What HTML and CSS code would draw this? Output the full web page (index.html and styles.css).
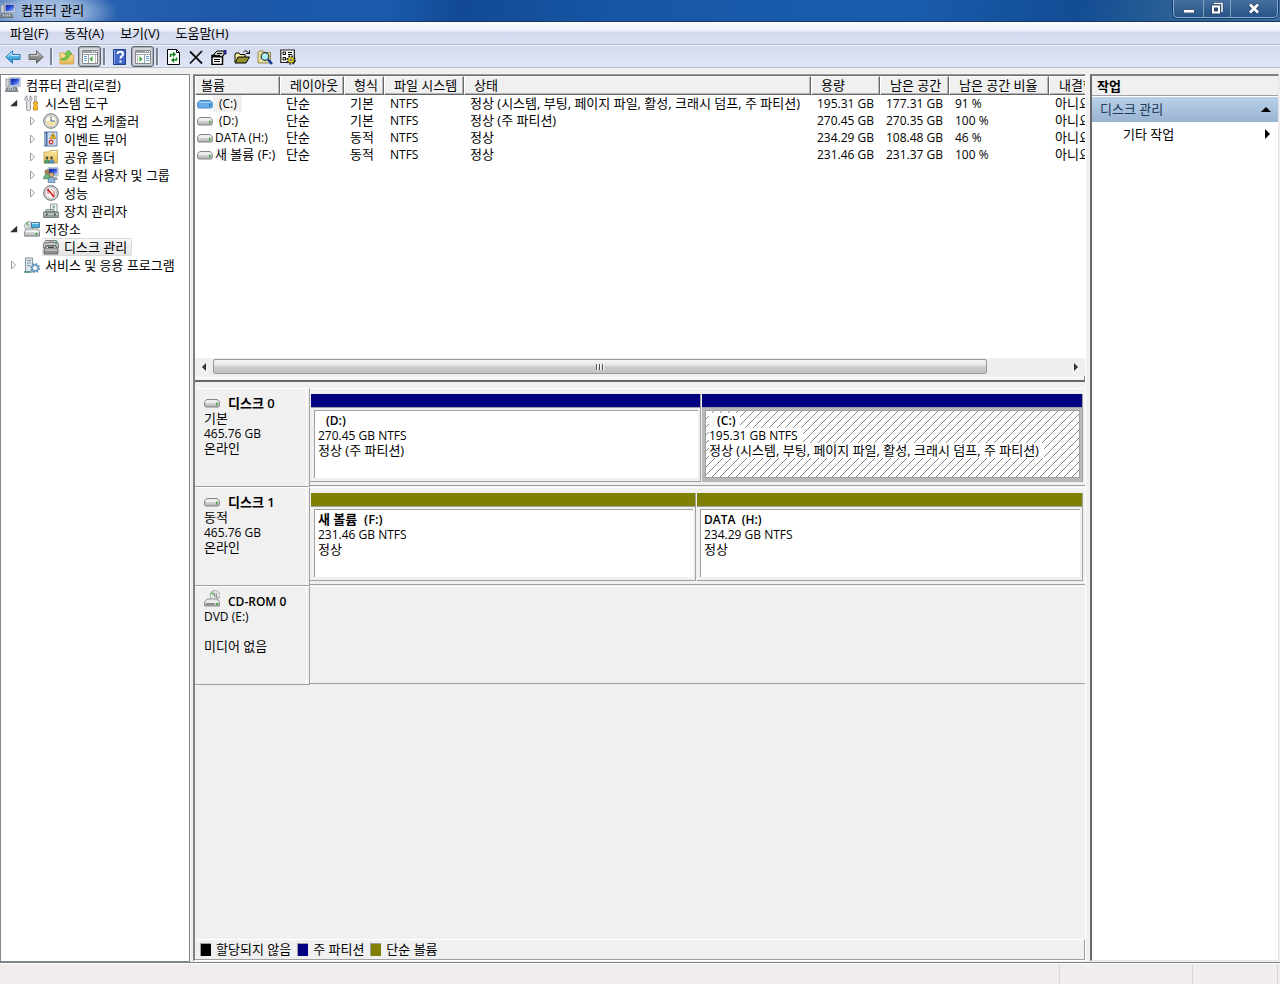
FILE: index.html
```html
<!DOCTYPE html>
<html lang="ko">
<head>
<meta charset="utf-8">
<title>컴퓨터 관리</title>
<link rel="stylesheet" href="styles.css">
</head>
<body>
<svg class="defs" aria-hidden="true">
  <defs>
    <linearGradient id="gBlue" x1="0" y1="0" x2="0" y2="1"><stop offset="0" stop-color="#8fd8f8"/><stop offset="1" stop-color="#1a86cc"/></linearGradient>
    <linearGradient id="gGray" x1="0" y1="0" x2="0" y2="1"><stop offset="0" stop-color="#b4b4b4"/><stop offset="1" stop-color="#707070"/></linearGradient>
    <linearGradient id="gScreen" x1="0" y1="0" x2="1" y2="1"><stop offset="0" stop-color="#0a1a9c"/><stop offset=".5" stop-color="#2c50d8"/><stop offset="1" stop-color="#b8ccff"/></linearGradient>
    <linearGradient id="gFolder" x1="0" y1="0" x2="0" y2="1"><stop offset="0" stop-color="#fbe9a0"/><stop offset="1" stop-color="#e3b653"/></linearGradient>
    <linearGradient id="gDisk" x1="0" y1="0" x2="0" y2="1"><stop offset="0" stop-color="#f6f6f6"/><stop offset="1" stop-color="#aeb0b4"/></linearGradient>
  </defs>
  <symbol id="computer" viewBox="0 0 16 16">
    <path d="M1 2h3v8H1z" fill="#d5d9dc" stroke="#7b8388" stroke-width=".7"/>
    <path d="M4.500 .8h10.700v8.500H4.500z" fill="#e8ebef" stroke="#949ca8" stroke-width=".8"/>
    <path d="M5.500 1.700h8.800v6.600H5.500z" fill="url(#gScreen)"/>
    <path d="M8 9.500h4l1 2H7z" fill="#a7adb5"/>
    <path d="M1.500 11h10l1.500 3.500H.5z" fill="#8c979c" stroke="#566065" stroke-width=".7"/>
    <path d="M3 12h1m1 0h1m1 0h1m1 0h1" stroke="#e9eff0"/>
  </symbol>
  <symbol id="tools" viewBox="0 0 16 16">
    <path d="M3 .8v3.500l1.500 1.200L6 4.300V.8c1.600.8 2.200 2.300 1.800 3.800-.3 1-.8 1.500-1.400 2v8c0 1.400-3.700 1.400-3.700 0v-8C1.400 5.700.7 4.900.9 3.400 1.100 2.200 1.800 1.200 3 .8z" fill="#e6e8ea" stroke="#75797d" stroke-width=".8"/>
    <path d="M10.500 1h1.800v6h-1.800z" fill="#ddd" stroke="#888" stroke-width=".6"/>
    <path d="M9.500 7h4v2l-.8 1 .8 1.500V15h-4v-3.500l.8-1.500-.8-1z" fill="#f8bd26" stroke="#bb790c" stroke-width=".7"/>
  </symbol>
  <symbol id="clock" viewBox="0 0 16 16">
    <circle cx="8" cy="8" r="7.300" fill="#ddd" stroke="#74787b"/>
    <circle cx="8" cy="8" r="5.500" fill="#fffbe8" stroke="#aaa" stroke-width=".6"/>
    <path d="M8 8h5a5 5 0 0 1-10 0z" fill="#f5e4a6"/>
    <path d="M8 3.500V8h4" fill="none" stroke="#4b6b9c" stroke-width="1.100"/>
  </symbol>
  <symbol id="event" viewBox="0 0 16 16">
    <path d="M1.500 1h12.500v14H1.500z" fill="#d9e6f5" stroke="#5c7bab"/>
    <path d="M1.500 1h3v14h-3z" fill="#456ba8"/>
    <path d="M1 3h2m-2 2h2m-2 2h2m-2 2h2m-2 2h2m-2 2h2" stroke="#e6ecf5"/>
    <path d="M5.500 4h7m-7 3h7m-7 3h7m-7 3h7" stroke="#91a8c5" stroke-width=".8"/>
    <path d="M10 2l3 5.500H7z" fill="#ffd42a" stroke="#ad7700" stroke-width=".6"/><path d="M10 4v1.800m0 .6v.8" stroke="#222" stroke-width=".8"/>
    <circle cx="8" cy="11" r="2.400" fill="#dc3941"/><path d="M7 10l2 2m0-2l-2 2" stroke="#fff" stroke-width=".8"/>
  </symbol>
  <symbol id="shared" viewBox="0 0 16 16">
    <path d="M1 3h5l1-1.500h7.500V14H1z" fill="url(#gFolder)" stroke="#c49a3f" stroke-width=".8"/><path d="M9 2.500h4" stroke="#fff"/>
    <circle cx="4" cy="8.800" r="1.400" fill="#4b4b3c"/><circle cx="8.500" cy="8.800" r="1.400" fill="#4b4b3c"/>
    <path d="M1.500 14c0-4.500 5-4.500 5 0z" fill="#4caa7a" stroke="#206a50" stroke-width=".6"/><path d="M6.200 14c0-4.500 5-4.500 5 0z" fill="#5e9ccc" stroke="#275a89" stroke-width=".6"/>
  </symbol>
  <symbol id="users" viewBox="0 0 16 16">
    <path d="M5 .8h10v8H5z" fill="#e7ebf1" stroke="#8e96a4" stroke-width=".8"/><path d="M6 1.700h8.100v6.100H6z" fill="url(#gScreen)"/>
    <path d="M10 10h4l1 3h-4z" fill="#9fa6ac"/>
    <circle cx="4" cy="5" r="2.200" fill="#a98a5c" stroke="#705230" stroke-width=".6"/><path d="M.5 12c0-6.500 6.500-6.500 6.500 0z" fill="#6db07d" stroke="#35754a" stroke-width=".5"/>
    <circle cx="8.500" cy="7.800" r="2.200" fill="#dbb27c" stroke="#7b5527" stroke-width=".7"/><path d="M5 15.500c0-7 7-7 7 0z" fill="#8fb8d8" stroke="#34668e" stroke-width=".6"/>
  </symbol>
  <symbol id="perf" viewBox="0 0 16 16">
    <circle cx="8" cy="8" r="7.300" fill="#e3e3e3" stroke="#666"/><circle cx="8" cy="8" r="5.400" fill="#fff" stroke="#999" stroke-width=".6"/>
    <path d="M5 9V4.500M11 11V6.500" fill="none" stroke="#c33" stroke-width=".9"/><path d="M4.500 4l6.500 8" stroke="#d01818" stroke-width="1.600"/><path d="M8 4l3 3" stroke="#d66" stroke-width=".8"/>
  </symbol>
  <symbol id="device" viewBox="0 0 16 16">
    <path d="M7.500 1h6.500v8H7.500z" fill="#f1f5f3" stroke="#7c8985" stroke-width=".8"/><path d="M9.500 2.500h2.500v3H9.500z" fill="#8eb69d"/>
    <path d="M3.500 6.500h7l1.500 2H2z" fill="#c8cecd" stroke="#68726f" stroke-width=".7"/>
    <path d="M.6 9h14.800v5.500H.6z" fill="#97a29f" stroke="#606a67" stroke-width=".8"/><path d="M1 11h14" stroke="#dde4e1"/><path d="M3 10.500h1.500v2H3zm8 0h1.500v2H11z" fill="#36403d"/>
  </symbol>
  <symbol id="storage" viewBox="0 0 16 16">
    <circle cx="5" cy="5" r="4.500" fill="#dfe4e6" stroke="#8a949a" stroke-width=".7"/><path d="M5 5L1 3a5 5 0 0 1 3-2.500z" fill="#80bd8b"/><circle cx="5" cy="5" r="1.300" fill="#fff" stroke="#777" stroke-width=".5"/>
    <path d="M7.500 1.500h8v5h-8z" fill="#4cb0df" stroke="#316885" stroke-width=".8"/><path d="M8 2.500h7" stroke="#b9e6fa"/>
    <path d="M2 8h12l1.500 2.500v4.700H.6v-4.700z" fill="url(#gDisk)" stroke="#72787c" stroke-width=".8"/><path d="M1 10.500h14" stroke="#fff" stroke-width=".7"/><path d="M11.500 12h2v2h-2z" fill="#38a844"/>
  </symbol>
  <symbol id="diskman" viewBox="0 0 16 16">
    <path d="M2.500 1.500h11l2 3.500v4H.5V5z" fill="#c9c9c9" stroke="#6d6d6d" stroke-width=".8"/><path d="M2 5c2-2.500 10-2.500 12 0" fill="none" stroke="#666"/><path d="M12 3.500h2" stroke="#2cb34a" stroke-width="1.500"/>
    <path d="M1 10.500l2-4h10l2 4v4.500H1z" fill="#909090" stroke="#5c5c5c" stroke-width=".8"/><path d="M4 8.500h8" stroke="#fff"/><path d="M5 8.500h6" stroke="#444"/><path d="M2 11h12" stroke="#ddd"/>
  </symbol>
  <symbol id="services" viewBox="0 0 16 16">
    <path d="M1.500 1h7v14h-7z" fill="#dfe7ec" stroke="#6d7d88" stroke-width=".8"/><path d="M3 3.500h4M3 6h4M3 8.500h3" stroke="#7d909e"/><path d="M0 15h7" stroke="#4b8d84" stroke-width="1.500"/>
    <circle cx="11" cy="11" r="3" fill="none" stroke="#79a3c5" stroke-width="2"/><circle cx="11" cy="11" r="4.300" fill="none" stroke="#628cae" stroke-width="1.300" stroke-dasharray="1.700 1.680"/>
  </symbol>
  <symbol id="drive" viewBox="0 0 16 10">
    <path d="M3 1.500h10l2.300 2v4.700l-1 .8H1.700l-1-.8V3.500z" fill="url(#gDisk)" stroke="#77797d" stroke-width=".9"/><path d="M1.500 3.500h13v1h-13z" fill="#fff"/><path d="M12 4.500h1.500v3H12z" fill="#43a548"/>
  </symbol>
  <symbol id="driveSel" viewBox="0 0 16 10">
    <path d="M3 1.500h10l2.300 2v4.700l-1 .8H1.700l-1-.8V3.500z" fill="#68adea" stroke="#3a7fbf" stroke-width=".9"/><path d="M2 3.500h12" stroke="#a0cff8"/><path d="M12 4.500h1.500v3H12z" fill="#267eac"/>
  </symbol>
  <symbol id="cdrom" viewBox="0 0 16 17">
    <circle cx="11" cy="5.500" r="5" fill="#e4e6e6" stroke="#a0a2a2" stroke-width=".8"/><path d="M11 5.500L6.500 4a5 5 0 0 1 2-3z" fill="#85bd88"/><path d="M11 5.500L15.500 7l-2 3z" fill="#b9c4d0"/><path d="M10.500 3v4m1.800-4v5" stroke="#777" stroke-width=".8"/>
    <path d="M3 9h10l2.400 3v4H.6v-4z" fill="url(#gDisk)" stroke="#77797d" stroke-width=".8"/><path d="M1.500 12h13" stroke="#fff"/><path d="M2 14h8" stroke="#555"/><path d="M12 13h2v2h-2z" fill="#34a944"/>
  </symbol>
  <symbol id="back" viewBox="0 0 16 16"><path d="M.8 8L7.500 1.800v3.700H15v5H7.500v3.700z" fill="url(#gBlue)" stroke="#287bb5"/><path d="M2.600 7.500L6.500 4v2.500h7.500" fill="none" stroke="#c1edff"/></symbol>
  <symbol id="forward" viewBox="0 0 16 16"><path d="M15.200 8L8.500 1.800v3.700H1v5h7.500v3.700z" fill="url(#gGray)" stroke="#666"/><path d="M2 6.500h7.500V4l3.900 3.500" fill="none" stroke="#ccc"/></symbol>
  <symbol id="up" viewBox="0 0 16 16"><path d="M1 4h5l1 2h7.500v9H1z" fill="url(#gFolder)" stroke="#d0a03b" stroke-width=".8"/><path d="M2.500 9.500c3 0 4.500-1 5-4.500H5.800L9.500 1l3.500 4h-2.200C10.500 9 7.500 11.500 2.500 11z" fill="#7ccc4c" stroke="#4b9c30" stroke-width=".7"/></symbol>
  <symbol id="treepane" viewBox="0 0 16 16"><path d="M.5 1.500h15v13H.5z" fill="#fff" stroke="#888"/><path d="M1 3h14" stroke="#9a9fa8" stroke-width="2"/><path d="M10 2.500h1m1 0h1m1 0h1" stroke="#fff"/><path d="M1 5.500h14M6.500 6v8" stroke="#9aa2ad"/><path d="M2 7.500h3m-3 2h3m-3 2h3" stroke="#59a0dc"/><path d="M10.500 7v6L7.500 10z" fill="#35a838"/><path d="M13.500 6v8" stroke="#bbb"/></symbol>
  <symbol id="actpane" viewBox="0 0 16 16"><path d="M.5 1.500h15v13H.5z" fill="#fff" stroke="#888"/><path d="M1 3h14" stroke="#9a9fa8" stroke-width="2"/><path d="M10 2.500h1m1 0h1m1 0h1" stroke="#fff"/><path d="M1 5.500h14M9.500 6v8" stroke="#9aa2ad"/><path d="M11 7.500h3m-3 2h3m-3 2h3" stroke="#59a0dc"/><path d="M4.500 7v6l3-3z" fill="#35a838"/><path d="M2.500 6v8" stroke="#bbb"/></symbol>
  <symbol id="help" viewBox="0 0 16 16"><path d="M1.500.5h12v15h-12z" fill="#4168c5" stroke="#213f91"/><path d="M2.500 1v14" stroke="#89a8ef"/><path d="M5.500 5c0-3 5.500-3 5.500 0 0 2-2.500 2-2.500 4.500m0 2v2" fill="none" stroke="#fff" stroke-width="2"/></symbol>
  <symbol id="refresh" viewBox="0 0 16 16"><path d="M2.500.5h9l3 3v12h-12z" fill="#fff" stroke="#000"/><path d="M11.500.5v3h3" fill="none" stroke="#000"/><path d="M5.500 8V5.500H8M11.500 8.500V11H9" fill="none" stroke="#108018" stroke-width="1.500"/><path d="M8 2.500L11 5.500 8 8zM9 8.500L6 11l3 3z" fill="#108018"/></symbol>
  <symbol id="delete" viewBox="0 0 16 16"><path d="M2 2.500l12 12M14 2L2 14.500" stroke="#111" stroke-width="1.800"/></symbol>
  <symbol id="props" viewBox="0 0 16 16"><path d="M1 6.500h10.500v9H1z" fill="#fff" stroke="#000" stroke-width="1.500"/><path d="M1 7.500h10" stroke="#000" stroke-width="2"/><path d="M3 10.500h6m-6 2h6" stroke="#000"/><path d="M2.500 5.500L6 2h7v4l-3 2-2-2-2 1z" fill="#ccc" stroke="#000"/><path d="M6 4.500h5M7 6l2 2" stroke="#000"/><path d="M13 1h2.500v4.500H13z" fill="#25258e"/></symbol>
  <symbol id="open" viewBox="0 0 16 16"><path d="M1 13V5l1-1h3l1 1.500h5V8" fill="#f7ef9f" stroke="#000"/><path d="M1 14l3-6h11.500l-3.500 6z" fill="#91912a" stroke="#000"/><path d="M9.500 3c2-2 4-1 5 1.500" fill="none" stroke="#000"/><path d="M12 4.500h3.500V1.500" fill="none" stroke="#000"/></symbol>
  <symbol id="find" viewBox="0 0 16 16"><path d="M1 3.500L2.500 2h4L8 3.500h5.500V14H1z" fill="#e6dfa4" stroke="#95894e"/><circle cx="8" cy="7.500" r="3.800" fill="#a0eef3" stroke="#333" stroke-width="1.200"/><path d="M6 6.500l2-1" stroke="#fff"/><path d="M11 10.500l4 4.500" stroke="#14329b" stroke-width="2.500"/></symbol>
  <symbol id="settings" viewBox="0 0 16 16"><path d="M.8 1h13.500v12.500H.8z" fill="#fff" stroke="#222" stroke-width="1.200"/><path d="M3 3h2.500v2.500H3zM3 8.500h2.500V11H3z" fill="none" stroke="#000"/><path d="M8 3.500h4M8 5.500h4" stroke="#000"/><circle cx="11" cy="11" r="3.900" fill="none" stroke="#222" stroke-width="1.800" stroke-dasharray="1.600 1.460"/><circle cx="11" cy="11" r="3" fill="#f0dc30" stroke="#6b6210" stroke-width=".7"/><circle cx="11" cy="11" r="1" fill="#fff" stroke="#000" stroke-width=".6"/></symbol>
</svg>

<div class="window">
  <header class="titlebar">
    <svg class="icon"><use href="#computer"/></svg>
    <h1 class="title">컴퓨터 관리</h1>
    <div class="controls">
      <button class="control min" aria-label="최소화"><svg viewBox="0 0 14 14"><path d="M1.500 7.500h11v3.500h-11z" fill="#fff" stroke="#455a78"/></svg></button>
      <button class="control max" aria-label="이전 크기로"><svg viewBox="0 0 14 14"><path d="M4 1.500h8V10" fill="none" stroke="#33496c" stroke-width="3"/><path d="M4 1.500h8V10" fill="none" stroke="#fff" stroke-width="1.500"/><path d="M3 4.500h6v6H3z" fill="#33496c" stroke="#33496c" stroke-width="4"/><path d="M3 4.500h6v6H3z" fill="#33496c" stroke="#fff" stroke-width="2"/></svg></button>
      <button class="control close" aria-label="닫기"><svg viewBox="0 0 14 14"><path d="M3 2.500l8 8m0-8l-8 8" stroke="#30476b" stroke-width="4.500"/><path d="M3 2.500l8 8m0-8l-8 8" stroke="#fff" stroke-width="2.600"/></svg></button>
    </div>
  </header>

  <nav class="menubar">
    <button class="menu">파일(F)</button>
    <button class="menu">동작(A)</button>
    <button class="menu">보기(V)</button>
    <button class="menu">도움말(H)</button>
  </nav>

  <div class="toolbar" role="toolbar">
    <button class="tool" aria-label="뒤로"><svg class="icon"><use href="#back"/></svg></button>
    <button class="tool" aria-label="앞으로"><svg class="icon"><use href="#forward"/></svg></button>
    <span class="sep"></span>
    <button class="tool" aria-label="위로"><svg class="icon"><use href="#up"/></svg></button>
    <button class="tool pressed" aria-label="콘솔 트리"><svg class="icon"><use href="#treepane"/></svg></button>
    <span class="sep"></span>
    <button class="tool" aria-label="도움말"><svg class="icon"><use href="#help"/></svg></button>
    <button class="tool pressed" aria-label="작업 창"><svg class="icon"><use href="#actpane"/></svg></button>
    <span class="sep"></span>
    <button class="tool" aria-label="새로 고침"><svg class="icon"><use href="#refresh"/></svg></button>
    <button class="tool" aria-label="삭제"><svg class="icon"><use href="#delete"/></svg></button>
    <button class="tool" aria-label="속성"><svg class="icon"><use href="#props"/></svg></button>
    <button class="tool" aria-label="열기"><svg class="icon"><use href="#open"/></svg></button>
    <button class="tool" aria-label="찾기"><svg class="icon"><use href="#find"/></svg></button>
    <button class="tool" aria-label="설정"><svg class="icon"><use href="#settings"/></svg></button>
  </div>

  <main class="workspace">
    <aside class="tree">
      <ul>
        <li><div class="node root"><svg class="icon"><use href="#computer"/></svg><span class="name">컴퓨터 관리(로컬)</span></div></li>
        <li><div class="node"><i class="twist opened"></i><svg class="icon"><use href="#tools"/></svg><span class="name">시스템 도구</span></div>
          <ul class="sub">
            <li><div class="node"><svg class="twist" viewBox="0 0 8 10"><path d="M1.500 1v8l4-4z" fill="#fff" stroke="#999"/></svg><svg class="icon"><use href="#clock"/></svg><span class="name">작업 스케줄러</span></div></li>
            <li><div class="node"><svg class="twist" viewBox="0 0 8 10"><path d="M1.500 1v8l4-4z" fill="#fff" stroke="#999"/></svg><svg class="icon"><use href="#event"/></svg><span class="name">이벤트 뷰어</span></div></li>
            <li><div class="node"><svg class="twist" viewBox="0 0 8 10"><path d="M1.500 1v8l4-4z" fill="#fff" stroke="#999"/></svg><svg class="icon"><use href="#shared"/></svg><span class="name">공유 폴더</span></div></li>
            <li><div class="node"><svg class="twist" viewBox="0 0 8 10"><path d="M1.500 1v8l4-4z" fill="#fff" stroke="#999"/></svg><svg class="icon"><use href="#users"/></svg><span class="name">로컬 사용자 및 그룹</span></div></li>
            <li><div class="node"><svg class="twist" viewBox="0 0 8 10"><path d="M1.500 1v8l4-4z" fill="#fff" stroke="#999"/></svg><svg class="icon"><use href="#perf"/></svg><span class="name">성능</span></div></li>
            <li><div class="node"><i class="twist"></i><svg class="icon"><use href="#device"/></svg><span class="name">장치 관리자</span></div></li>
          </ul></li>
        <li><div class="node"><i class="twist opened"></i><svg class="icon"><use href="#storage"/></svg><span class="name">저장소</span></div>
          <ul class="sub">
            <li><div class="node"><i class="twist"></i><span class="selected"><svg class="icon"><use href="#diskman"/></svg><span class="name">디스크 관리</span></span></div></li>
          </ul></li>
        <li><div class="node"><svg class="twist" viewBox="0 0 8 10"><path d="M1.500 1v8l4-4z" fill="#fff" stroke="#999"/></svg><svg class="icon"><use href="#services"/></svg><span class="name">서비스 및 응용 프로그램</span></div></li>
      </ul>
    </aside>

    <section class="center">
      <div class="volumes">
        <div class="tablewrap">
          <table class="vtable">
            <colgroup><col class="c-vol"><col class="c-lay"><col class="c-type"><col class="c-fs"><col class="c-stat"><col class="c-cap"><col class="c-cap"><col class="c-pct"><col class="c-fault"></colgroup>
            <thead><tr><th>볼륨</th><th>레이아웃</th><th>형식</th><th>파일 시스템</th><th>상태</th><th>용량</th><th>남은 공간</th><th>남은 공간 비율</th><th>내결함성</th></tr></thead>
            <tbody>
              <tr><td><div class="vol"><svg class="drive"><use href="#driveSel"/></svg><span class="vname blank picked">(C:)</span></div></td><td>단순</td><td>기본</td><td class="lat">NTFS</td><td>정상 (시스템, 부팅, 페이지 파일, 활성, 크래시 덤프, 주 파티션)</td><td class="lat">195.31 GB</td><td class="lat">177.31 GB</td><td class="lat">91 %</td><td>아니요</td></tr>
              <tr><td><div class="vol"><svg class="drive"><use href="#drive"/></svg><span class="vname blank">(D:)</span></div></td><td>단순</td><td>기본</td><td class="lat">NTFS</td><td>정상 (주 파티션)</td><td class="lat">270.45 GB</td><td class="lat">270.35 GB</td><td class="lat">100 %</td><td>아니요</td></tr>
              <tr><td><div class="vol"><svg class="drive"><use href="#drive"/></svg><span class="vname">DATA (H:)</span></div></td><td>단순</td><td>동적</td><td class="lat">NTFS</td><td>정상</td><td class="lat">234.29 GB</td><td class="lat">108.48 GB</td><td class="lat">46 %</td><td>아니요</td></tr>
              <tr><td><div class="vol"><svg class="drive"><use href="#drive"/></svg><span class="vname ko">새 볼륨 (F:)</span></div></td><td>단순</td><td>동적</td><td class="lat">NTFS</td><td>정상</td><td class="lat">231.46 GB</td><td class="lat">231.37 GB</td><td class="lat">100 %</td><td>아니요</td></tr>
            </tbody>
          </table>
        </div>
        <div class="hscroll">
          <button class="arrow" aria-label="왼쪽"><i class="left"></i></button>
          <div class="track"><div class="thumb"><i class="grip"></i></div></div>
          <button class="arrow" aria-label="오른쪽"><i class="right"></i></button>
        </div>
      </div>
      <div class="splitter"></div>

      <div class="disks">
        <div class="disk">
          <div class="info"><h2 class="dname ko"><svg class="drive"><use href="#drive"/></svg>디스크 0</h2><p class="ko">기본</p><p>465.76 GB</p><p class="ko">온라인</p></div>
          <div class="parts">
            <div class="part d primary"><div class="bar"></div><div class="frame"><div class="body"><p><b class="indent">(D:)</b></p><p>270.45 GB NTFS</p><p class="ko">정상 (주 파티션)</p></div></div></div>
            <div class="part c primary active"><div class="bar"></div><div class="frame"><div class="body"><p><b class="indent">(C:)</b></p><p><span>195.31 GB NTFS</span></p><p class="ko"><span>정상 (시스템, 부팅, 페이지 파일, 활성, 크래시 덤프, 주 파티션)</span></p></div></div></div>
          </div>
        </div>
        <div class="disk">
          <div class="info"><h2 class="dname ko"><svg class="drive"><use href="#drive"/></svg>디스크 1</h2><p class="ko">동적</p><p>465.76 GB</p><p class="ko">온라인</p></div>
          <div class="parts">
            <div class="part simple"><div class="bar"></div><div class="frame"><div class="body"><p class="ko"><b>새 볼륨 &nbsp;(F:)</b></p><p>231.46 GB NTFS</p><p class="ko">정상</p></div></div></div>
            <div class="part simple"><div class="bar"></div><div class="frame"><div class="body"><p><b>DATA &nbsp;(H:)</b></p><p>234.29 GB NTFS</p><p class="ko">정상</p></div></div></div>
          </div>
        </div>
        <div class="disk">
          <div class="info"><h2 class="dname"><svg class="cd"><use href="#cdrom"/></svg>CD-ROM 0</h2><p>DVD (E:)</p><p>&nbsp;</p><p class="ko">미디어 없음</p></div>
          <div class="parts"></div>
        </div>
      </div>

      <div class="legend">
        <span class="key"><i class="swatch none"></i>할당되지 않음</span>
        <span class="key"><i class="swatch pri"></i>주 파티션</span>
        <span class="key"><i class="swatch sim"></i>단순 볼륨</span>
      </div>
    </section>

    <aside class="actions">
      <h2 class="ahead">작업</h2>
      <button class="agroup"><span>디스크 관리</span><i class="tri-up"></i></button>
      <button class="aitem"><span>기타 작업</span><i class="tri-right"></i></button>
    </aside>
  </main>

  <footer class="status"><span class="s-main"></span><span class="s-mid"></span><span class="s-end"></span></footer>
</div>
</body>
</html>
```

FILE: styles.css
```css
* { box-sizing: border-box; }
body { margin: 0; font: 13px/17px "Open Sans", "Noto Sans CJK KR", sans-serif; color: #000; }
h1, h2, p, ul { margin: 0; padding: 0; font-size: inherit; }
ul { list-style: none; }
button { margin: 0; padding: 0; border: 0; background: none; font: inherit; color: inherit; }
i { display: block; flex: none; }
svg { display: block; flex: none; }
.defs { position: absolute; width: 0; height: 0; }
.icon { width: 16px; height: 16px; }
.drive { width: 16px; height: 10px; }
.cd { width: 16px; height: 17px; }

.window { display: flex; flex-direction: column; height: 100vh; overflow: hidden; background: #f0f0f0; }

/* title bar */
.titlebar { flex: none; display: flex; align-items: center; gap: 5px; height: 22px; padding-right: 2px; border-bottom: 1px solid #17345f;
  background: radial-gradient(ellipse 72px 26px at 46px 12px, #b4c9e6 0%, #94b2da 50%, transparent 100%), linear-gradient(100deg, #2e67b5 0%, #1c57a8 20%, #1a5bae 30%, #124a94 36%, #1656a5 48%, #1a5dae 70%, #124c94 84%, #2c6295 92%, #386b9e 100%); }
.title { flex: 1; font-weight: 400; }
.controls { display: flex; align-self: flex-start; height: 18px; border: 1px solid #8aa8cc; border-top: 0; border-radius: 0 0 5px 5px; background: linear-gradient(#456f9e, #275487); box-shadow: 0 0 0 1px #1b3e6b; overflow: hidden; }
.control { display: flex; justify-content: center; align-items: center; }
.control svg { width: 14px; height: 14px; }
.min { width: 29px; }
.max { width: 27px; border-left: 1px solid #809ebe; }
.close { width: 47px; border-left: 1px solid #809ebe; }

/* menu and tools */
.menubar { flex: none; display: flex; align-items: center; gap: 16px; height: 23px; padding-left: 10px; background: linear-gradient(#fdfdff 0, #eaeef8 9px, #d4daed 10px, #d8def0 100%); border-bottom: 1px solid #b5bac6; }
.toolbar { flex: none; display: flex; align-items: center; height: 23px; padding-left: 2px; border-top: 1px solid #f4f6fb; border-bottom: 1px solid #b9bdc8; background: linear-gradient(#d4daed, #e0e6f6); }
.tool { display: flex; justify-content: center; align-items: center; width: 23px; height: 21px; }
.tool:first-child { width: 22px; }
.pressed { border: 1px solid #5d636f; border-radius: 3px; background: #d7d9df; box-shadow: inset 0 0 1px 1px #a3a9b5; }
.sep { width: 8px; height: 17px; padding-left: 3px; }
.sep ~ .sep { width: 7px; padding-left: 2px; }
.sep::before { content: ""; display: block; width: 2px; height: 17px; background: #7d8392; border-right: 1px solid #eef1f8; }

/* panes */
.workspace { flex: 1; min-height: 0; display: grid; grid-template-columns: 190px minmax(0, 1fr) 190px; gap: 3px; padding: 6px 0 0; }
.tree { border: 1px solid #828790; background: #fff; padding-top: 1px; }
.node { display: flex; align-items: center; height: 18px; padding-left: 9px; }
.root { padding-left: 4px; }
.sub { padding-left: 19px; }
.name { padding-left: 5px; white-space: nowrap; }
.twist { width: 8px; height: 10px; margin-right: 6px; }
.opened { height: 8px; background: #303030; clip-path: polygon(90% 10%, 90% 90%, 0 90%); }
.selected { display: flex; align-items: center; height: 18px; margin-left: -1px; padding: 0 4px 0 1px; border: 1px solid #d9d9d9; border-left: 0; border-radius: 2px; background: linear-gradient(#f8f8f8, #e5e5e5); }

.center { display: flex; flex-direction: column; min-width: 0; margin: 0 1px 1px 0; border: 1px solid #a0a0a0; border-left: 2px solid #808080; border-right-color: #fff; border-bottom-color: #fff; box-shadow: inset 0 1px #696969; padding-top: 1px; }
.volumes { flex: none; display: flex; flex-direction: column; height: 299px; background: #fff; }
.tablewrap { flex: 1; min-height: 0; overflow: hidden; }
.vtable { table-layout: fixed; width: 944px; border-collapse: separate; border-spacing: 0; }
.c-vol { width: 85px; }
.c-lay { width: 64px; }
.c-type { width: 40px; }
.c-fs { width: 80px; }
.c-stat { width: 347px; }
.c-cap { width: 69px; }
.c-pct { width: 100px; }
.c-fault { width: 90px; }
th { height: 19px; padding: 0 0 0 9px; font-weight: 400; text-align: left; white-space: nowrap; vertical-align: top; background: #f0f0f0; border: 1px solid #fff; border-right-color: #696969; border-bottom-color: #696969; box-shadow: inset -1px -1px #b5b5b5; line-height: 16px; }
th:first-child { padding-left: 5px; }
td { height: 17px; padding: 0 0 0 6px; white-space: nowrap; line-height: 17px; }
td:first-child { padding-left: 2px; }
.lat { font-size: 12px; }
.vol { display: flex; align-items: center; height: 17px; }
.vname { padding-left: 2px; font-size: 12px; }
.blank { padding: 0 5px 0 6px; }
.picked { background: #f0f0f0; }
.ko, .vname.ko { font-size: 13px; }

.hscroll { flex: none; display: flex; align-items: center; height: 17px; background: #efefef; }
.arrow { display: flex; align-items: center; justify-content: center; width: 18px; height: 17px; }
.left { border: 4px solid transparent; border-left: 0; border-right-color: #333; }
.right { border: 4px solid transparent; border-right: 0; border-left-color: #333; }
.track { flex: 1; }
.thumb { display: flex; align-items: center; justify-content: center; width: 90.6%; height: 15px; border: 1px solid #979797; border-radius: 2px; background: linear-gradient(#f5f5f5 0, #e5e5e7 45%, #cdcdd0 50%, #c3c3c6 100%); }
.grip { width: 8px; height: 6px; background: repeating-linear-gradient(90deg, #555 0 1px, #fff 1px 2px, transparent 2px 3px); }
.splitter { flex: none; height: 7px; background: #f0f0f0; border-top: 2px solid #f0f0f0; border-bottom: 2px solid #696969; border-right: 1px solid #808080; box-shadow: inset 0 1px #fff; }

.disks { flex: 1; min-height: 0; padding-top: 6px; font-size: 12px; }
.disk { display: flex; height: 99px; }
.info { width: 115px; padding: 6px 0 0 9px; border-top: 1px solid #fff; border-bottom: 1px solid #a0a0a0; border-right: 1px solid #a0a0a0; box-shadow: inset -2px 0 #f0f0f0, inset -3px 0 #fff; line-height: 15px; white-space: nowrap; }
.dname { display: flex; align-items: center; gap: 8px; height: 16px; font-weight: 600; }
.dname .cd { align-self: flex-end; margin-bottom: 2px; }
.parts { flex: 1; min-width: 0; display: flex; margin-bottom: 1px; padding: 5px 2px 3px 0; border-top: 1px solid #fff; border-bottom: 1px solid #a0a0a0; }
.part { flex: 1; min-width: 0; display: flex; flex-direction: column; border-right: 1px solid #a0a0a0; }
.part + .part { margin-left: 1px; }
.part.d { flex: 391; }
.part.c { flex: 381; }
.bar { height: 14px; border-bottom: 1px solid #a0a0a0; }
.part:first-child .bar { margin-left: 1px; }
.primary .bar { background: #000080; }
.simple .bar { background: #808000; }
.frame { flex: 1; display: flex; padding: 2px 2px 3px 4px; border-bottom: 1px solid #a0a0a0; }
.body { flex: 1; min-width: 0; padding: 2px 0 0 3px; border: 1px solid #a0a0a0; border-width: 1px 0 0 1px; background: #fff; line-height: 15px; white-space: nowrap; }
.body p { height: 15px; }
b { display: inline-block; font-weight: 600; }
.indent { padding: 0 5px 0 8px; }
.part + .part .frame { padding-left: 3px; }
.active .frame { background: #b8b8b8; border-bottom-color: #b8b8b8; }
.active .body { border: 1px solid #a0a0a0; background: #fff linear-gradient(135deg, transparent 46%, #8c8c8c 46%, #8c8c8c 54%, transparent 54%) 0 0 / 8px 8px; }
.active span, .active b { display: inline-block; height: 15px; background: #fff; }
.active span { padding-right: 5px; }

.legend { flex: none; display: flex; align-items: center; gap: 6px; height: 21px; padding-left: 5px; border: 1px solid #a0a0a0; border-width: 1px 1px 1px 0; border-top-color: #fff; }
.key { display: flex; align-items: center; gap: 5px; }
.swatch { width: 11px; height: 13px; border-top: 1px solid #a0a0a0; border-left: 1px solid #a0a0a0; }
.none { background: #000; }
.pri { background: #000080; }
.sim { background: #808000; }

.actions { margin: 0 1px 1px 0; border: 1px solid #e3e3e3; border-top: 2px solid #808080; border-left: 2px solid #696969; background: #fff; }
.ahead { height: 20px; padding: 1px 0 0 5px; font-weight: 600; line-height: 19px; background: #f0f0f0; border-bottom: 1px solid #a0a0a0; }
.agroup, .aitem { display: flex; align-items: center; justify-content: space-between; width: 100%; height: 24px; }
.agroup { height: 25px; margin-top: 1px; padding: 0 7px 0 8px; background: linear-gradient(#b9d1ea, #99b4d1); color: #1e395b; }
.aitem { padding: 0 8px 0 31px; }
.tri-up { border: 5px solid transparent; border-top: 0; border-bottom-color: #000; }
.tri-right { border: 5px solid transparent; border-right: 0; border-left-color: #000; }

.status { flex: none; display: flex; height: 22px; border-top: 1px solid #808080; background: #f0edec; box-shadow: inset 0 1px #fff; padding: 1px 2px 0 0; }
.status span { border-right: 1px solid #d7d7d7; }
.s-main { flex: 1; }
.s-mid { width: 133px; }
.s-end { width: 85px; }
```
